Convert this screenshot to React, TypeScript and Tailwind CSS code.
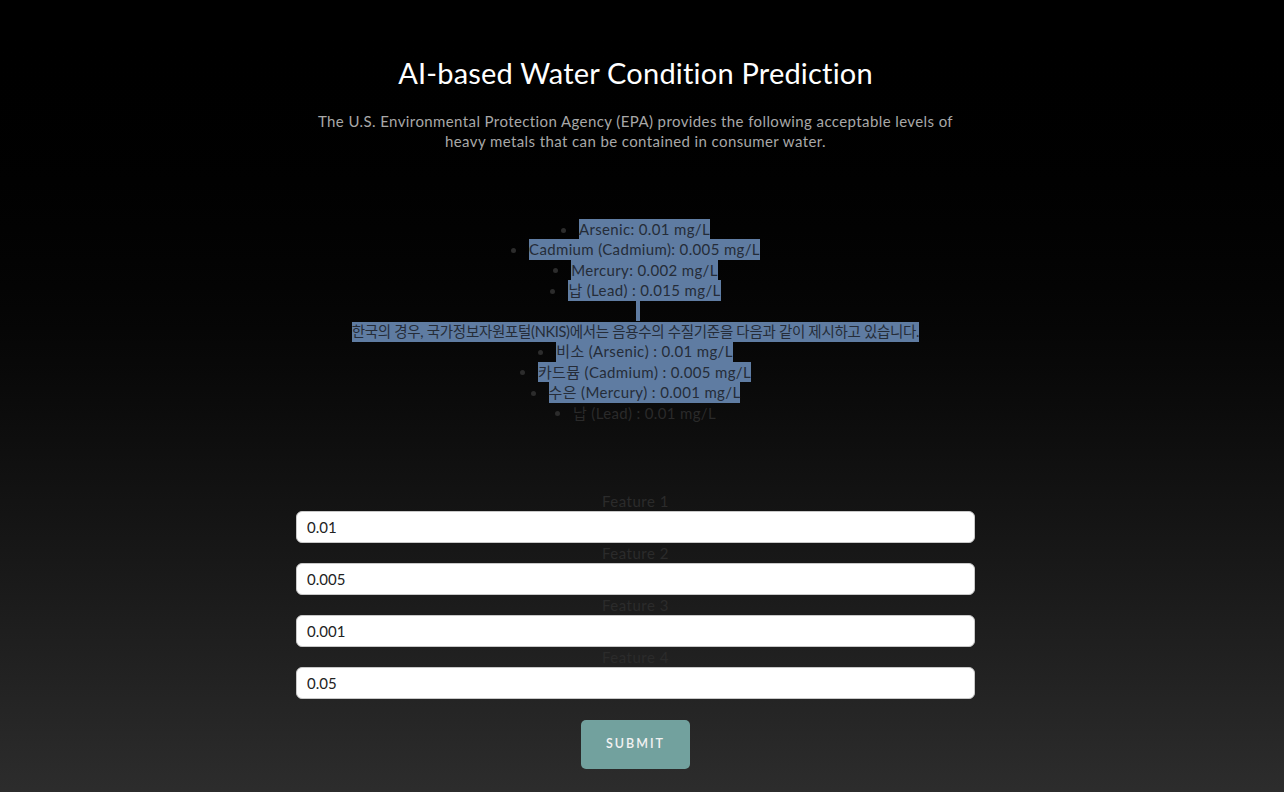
import React from "react";

const HL = "bg-[#5f7ca2] text-[#252c38]";

function Bullet() {
  return <span className="inline-block w-[5px] h-[5px] rounded-full bg-[#2c2c2c] align-middle mr-[13px] mb-[2px]" />;
}

function Item({ text, selected = true }: { text: string; selected?: boolean }) {
  return (
    <div className="leading-[20.4px] h-[20.4px]">
      <Bullet />
      <span className={selected ? `inline-block ${HL}` : "inline-block text-[#2a2a2a]"}>{text}</span>
    </div>
  );
}

export default function App() {
  const font = { fontFamily: "Lato, 'Noto Sans CJK KR', sans-serif" };
  return (
    <div
      className="min-h-screen w-full bg-gradient-to-b from-black to-[#2e2e2e] pr-[13px] flex flex-col items-center pb-[40px]"
      style={font}
    >
      <h1 className="pt-[55px] text-[29px] leading-[36px] text-white tracking-[0.2px]">
        AI-based Water Condition Prediction
      </h1>
      <p className="mt-[20px] w-[660px] text-center text-[15px] leading-[20px] tracking-[0.4px] text-[#a8a8a8]">
        The U.S. Environmental Protection Agency (EPA) provides the following acceptable levels of heavy metals that can be contained in consumer water.
      </p>
      <div className="mt-[68px] flex flex-col items-center text-[15px] tracking-[0.35px]">
        <Item text="Arsenic: 0.01 mg/L" />
        <Item text="Cadmium (Cadmium): 0.005 mg/L" />
        <Item text="Mercury: 0.002 mg/L" />
        <Item text="납 (Lead) : 0.015 mg/L" />
        <div className="h-[20.4px] flex justify-center">
          <span className={`inline-block w-[4px] h-full ml-[5px] ${HL}`} />
        </div>
        <div className="leading-[20.4px] h-[20.4px]">
          <span className={`inline-block text-[14.5px] tracking-[-0.3px] ${HL}`}>
            한국의 경우, 국가정보자원포털(NKIS)에서는 음용수의 수질기준을 다음과 같이 제시하고 있습니다.
          </span>
        </div>
        <Item text="비소 (Arsenic) : 0.01 mg/L" />
        <Item text="카드뮴 (Cadmium) : 0.005 mg/L" />
        <Item text="수은 (Mercury) : 0.001 mg/L" />
        <Item text="납 (Lead) : 0.01 mg/L" selected={false} />
      </div>
      <form className="mt-[68px] flex flex-col items-center" onSubmit={(e) => e.preventDefault()}>
        {["0.01", "0.005", "0.001", "0.05"].map((v, i) => (
          <div key={i} className="flex flex-col items-center">
            <label className="text-[15px] leading-[20px] tracking-[0.5px] text-[#2b2b2b]">
              Feature {i + 1}
            </label>
            <input
              defaultValue={v}
              className="w-[679px] h-[32px] rounded-[6px] bg-white border border-[#c8c8c8] px-[10px] text-[15px] text-[#222] outline-none"
              style={font}
            />
          </div>
        ))}
        <button
          type="submit"
          className="mt-[21px] w-[109px] h-[49px] rounded-[5px] bg-[#72a19e] text-[#f2f2f2] text-[12.5px] tracking-[2px] font-semibold"
          style={font}
        >
          SUBMIT
        </button>
      </form>
    </div>
  );
}
